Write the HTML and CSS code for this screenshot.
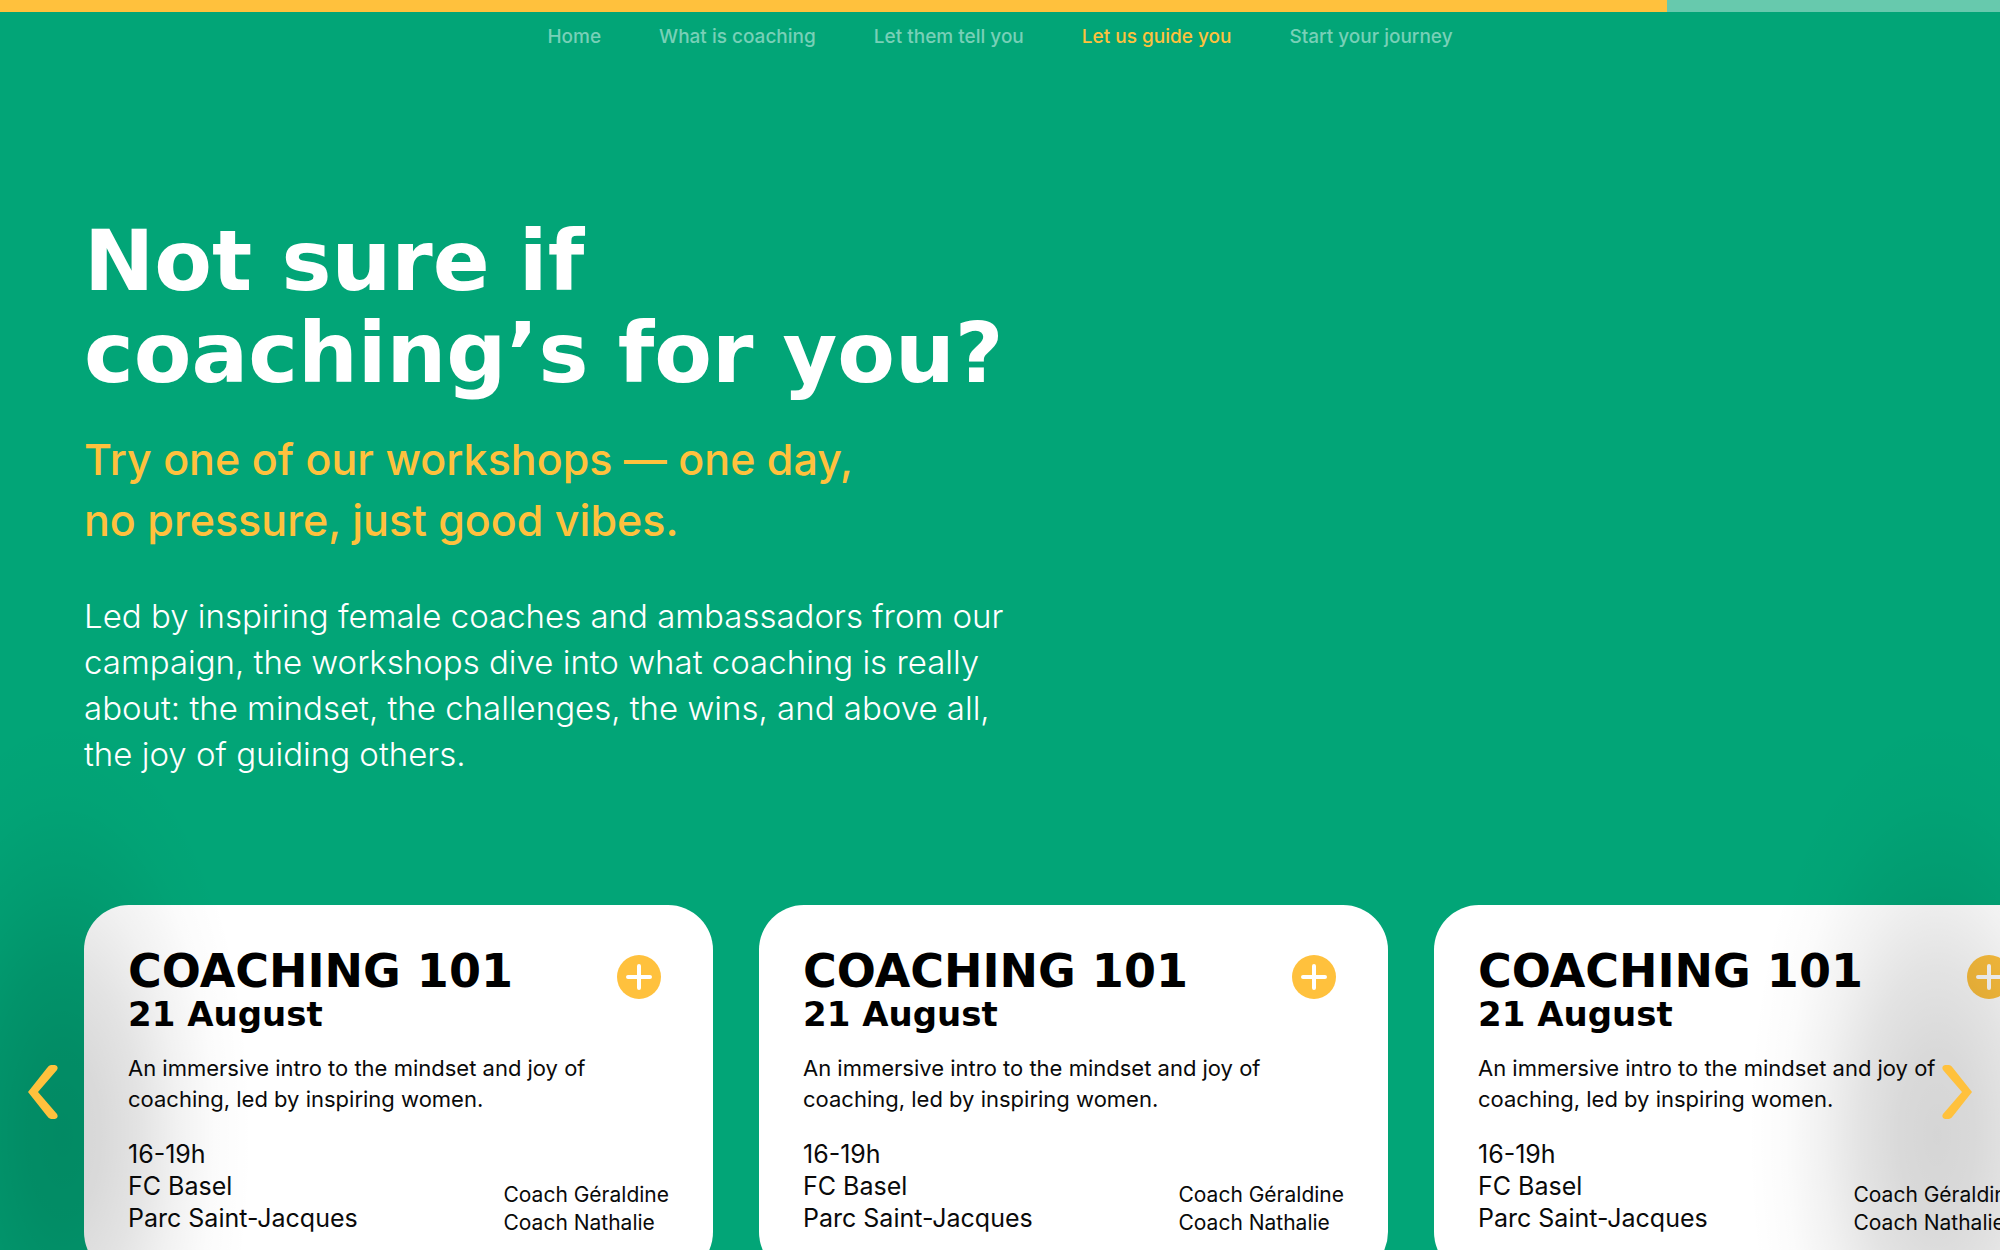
FILE: index.html
```html
<!DOCTYPE html>
<html lang="en">
<head>
<meta charset="utf-8">
<meta name="viewport" content="width=device-width, initial-scale=1">
<title>Let us guide you</title>
<link rel="stylesheet" href="styles.css">
</head>
<body>
<div class="page">
  <header class="header">
    <div class="progress"><div class="progress-fill"></div></div>
    <nav class="nav">
      <a href="#home">Home</a>
      <a href="#what">What is coaching</a>
      <a href="#stories">Let them tell you</a>
      <a class="active" href="#guide">Let us guide you</a>
      <a href="#start">Start your journey</a>
    </nav>
  </header>
  <main id="guide">
    <section class="intro">
      <h1>Not sure if<br>coaching’s for you?</h1>
      <p class="lead">Try one of our workshops — one day,<br>no pressure, just good vibes.</p>
      <p class="body">Led by inspiring female coaches and ambassadors from our<br>campaign, the workshops dive into what coaching is really<br>about: the mindset, the challenges, the wins, and above all,<br>the joy of guiding others.</p>
    </section>
    <section class="carousel">
      <div class="track">
        <article class="card">
          <div class="card-head">
            <div><h2>COACHING 101</h2><h3>21 August</h3></div>
            <button class="plus" type="button" aria-label="More"><svg viewBox="0 0 44 44"><path d="M22 11v22M11 22h22"/></svg></button>
          </div>
          <p class="desc">An immersive intro to the mindset and joy of<br>coaching, led by inspiring women.</p>
          <div class="card-foot">
            <p class="place">16-19h<br>FC Basel<br>Parc Saint-Jacques</p>
            <p class="coaches">Coach Géraldine<br>Coach Nathalie</p>
          </div>
        </article>
        <article class="card">
          <div class="card-head">
            <div><h2>COACHING 101</h2><h3>21 August</h3></div>
            <button class="plus" type="button" aria-label="More"><svg viewBox="0 0 44 44"><path d="M22 11v22M11 22h22"/></svg></button>
          </div>
          <p class="desc">An immersive intro to the mindset and joy of<br>coaching, led by inspiring women.</p>
          <div class="card-foot">
            <p class="place">16-19h<br>FC Basel<br>Parc Saint-Jacques</p>
            <p class="coaches">Coach Géraldine<br>Coach Nathalie</p>
          </div>
        </article>
        <article class="card">
          <div class="card-head">
            <div><h2>COACHING 101</h2><h3>21 August</h3></div>
            <button class="plus" type="button" aria-label="More"><svg viewBox="0 0 44 44"><path d="M22 11v22M11 22h22"/></svg></button>
          </div>
          <p class="desc">An immersive intro to the mindset and joy of<br>coaching, led by inspiring women.</p>
          <div class="card-foot">
            <p class="place">16-19h<br>FC Basel<br>Parc Saint-Jacques</p>
            <p class="coaches">Coach Géraldine<br>Coach Nathalie</p>
          </div>
        </article>
      </div>
      <button class="arrow prev" type="button" aria-label="Previous"><svg viewBox="0 0 30 54"><path d="M23 0H27Q31 1 29 5L10 27L29 49Q31 53 27 54H23Q21 54 19 51L0 27L19 3Q21 0 23 0Z"/></svg></button>
      <button class="arrow next" type="button" aria-label="Next"><svg viewBox="0 0 30 54"><path d="M7 0H3Q-1 1 1 5L20 27L1 49Q-1 53 3 54H7Q9 54 11 51L30 27L11 3Q9 0 7 0Z"/></svg></button>
    </section>
  </main>
</div>
</body>
</html>
```
FILE: styles.css
```css
* { box-sizing: border-box; }
body {
  margin: 0;
  background: #02a577;
  color: #fff;
  font-family: Inter, "Liberation Sans", sans-serif;
}
h1, h2, h3, p { margin: 0; }
h1, h2, h3 { font-family: "DejaVu Sans", sans-serif; font-weight: 700; }
button { border: 0; padding: 0; background: none; cursor: pointer; }
svg { display: block; width: 100%; height: 100%; }

.page { height: 100vh; overflow: hidden; }

.progress { height: 12px; background: #67c9ad; }
.progress-fill { width: 83.35%; height: 100%; background: #ffc13d; }
.nav {
  display: flex;
  justify-content: center;
  gap: 58px;
  padding-top: 12px;
  font-size: 19px;
  font-weight: 500;
  line-height: 26px;
}
.nav a { color: #78d0b7; text-decoration: none; }
.nav .active { color: #ffc13d; }

.intro { padding: 165px 84px 0; }
h1 { font-size: 84px; line-height: 92px; }
.lead {
  margin-top: 30px;
  color: #ffc13d;
  font-size: 43px;
  font-weight: 500;
  line-height: 61px;
}
.body {
  margin-top: 42px;
  font-size: 33px;
  font-weight: 300;
  line-height: 46px;
}

.carousel { position: relative; margin-top: 128px; }
.track { display: flex; gap: 46px; padding-left: 84px; }
.card {
  flex: 0 0 629px;
  padding: 40px 44px;
  border-radius: 45px;
  background: #fff;
  color: #0a0a0a;
}
.card-head { display: flex; justify-content: space-between; padding-right: 8px; }
h2 { font-size: 46px; line-height: 52px; color: #000; }
h3 { font-size: 34px; line-height: 34px; color: #000; }
.plus {
  width: 44px;
  height: 44px;
  margin-top: 10px;
  border-radius: 50%;
  background: #ffc13d;
}
.plus path { fill: none; stroke: #fff; stroke-width: 4; stroke-linecap: round; }
.desc { margin-top: 22px; font-size: 22px; line-height: 31px; }
.card-foot { display: flex; justify-content: space-between; align-items: flex-end; margin-top: 23px; }
.place { padding-bottom: 3px; font-size: 25px; line-height: 32px; }
.coaches { font-size: 21px; line-height: 28px; }

.arrow {
  position: absolute;
  top: 160px;
  width: 30px;
  height: 54px;
}
.arrow::before {
  content: "";
  position: absolute;
  top: -350px;
  width: 380px;
  height: 840px;
  background: radial-gradient(closest-side, rgba(0,0,0,.165), rgba(0,0,0,.15) 20%, rgba(0,0,0,.11) 40%, rgba(0,0,0,.055) 60%, rgba(0,0,0,.015) 80%, transparent);
  pointer-events: none;
}
.arrow svg { position: relative; fill: #ffc13d; }
.prev { left: 28px; }
.prev::before { left: -155px; }
.next { right: 28px; }
.next::before { right: -155px; }
```
